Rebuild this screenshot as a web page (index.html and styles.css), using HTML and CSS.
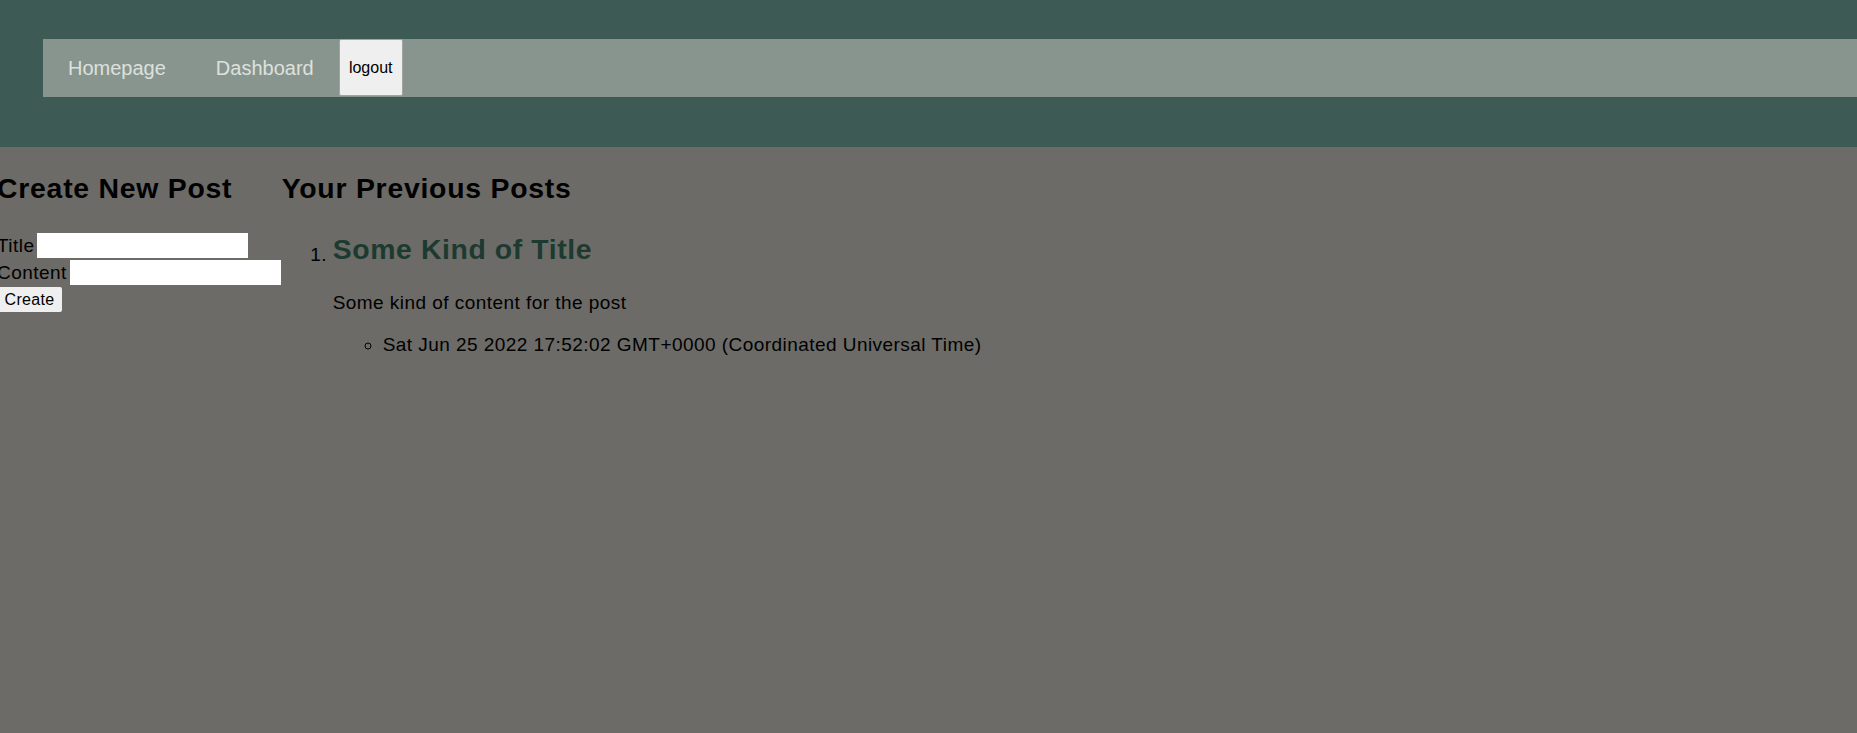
FILE: index.html
```html
<!DOCTYPE html>
<html>
<head>
<meta charset="utf-8">
<link rel="stylesheet" href="styles.css">
</head>
<body>
<header class="site-header">
  <nav class="nav">
    <a class="nav-link" href="#">Homepage</a>
    <a class="nav-link" href="#">Dashboard</a>
    <button class="logout-btn">logout</button>
  </nav>
</header>
<main class="main">
  <section class="create-col">
    <h2 class="section-title">Create New Post</h2>
    <form class="post-form">
      <div class="form-row"><label class="form-label">Title</label> <input class="form-input" type="text"></div>
      <div class="form-row"><label class="form-label">Content</label> <input class="form-input" type="text"></div>
      <div class="form-row"><button class="create-btn" type="button">Create</button></div>
    </form>
  </section>
  <section class="posts-col">
    <h2 class="section-title">Your Previous Posts</h2>
    <ol class="post-list">
      <li class="post-item">
        <h2 class="post-title">Some Kind of Title</h2>
        <p class="post-content">Some kind of content for the post</p>
        <ul class="post-meta">
          <li>Sat Jun 25 2022 17:52:02 GMT+0000 (Coordinated Universal Time)</li>
        </ul>
      </li>
    </ol>
  </section>
</main>
</body>
</html>
```
FILE: styles.css
```css
html, body {
  margin: 0;
  padding: 0;
}
body {
  background: #6c6b67;
  font-family: "Liberation Sans", Arial, sans-serif;
  font-size: 19px;
  letter-spacing: 0.45px;
  color: #000;
  min-height: 733px;
}
.site-header {
  background: #3d5a54;
  padding: 39px 0 50px 0;
}
.nav {
  margin-left: 43px;
  height: 58px;
  background: #88958f;
  display: flex;
  align-items: center;
  letter-spacing: 0;
}
.nav-link {
  color: #dde1dd;
  text-decoration: none;
  font-size: 20px;
  padding: 0 25px;
  line-height: 58px;
}
.logout-btn {
  align-self: flex-start;
  margin-left: 0;
  height: 57px;
  width: 64px;
  padding: 0;
  font-family: "Liberation Sans", Arial, sans-serif;
  font-size: 16px;
  color: #000;
  background: #efefef;
  border: 1px solid #a0a4a2;
  border-radius: 2px;
}
.main {
  display: flex;
  align-items: flex-start;
}
.create-col {
  margin-left: -3px;
}
.section-title {
  font-size: 28.4px;
  letter-spacing: 0.75px;
  font-weight: bold;
  margin: 25px 0 0 0;
  line-height: 33px;
}
.posts-col {
  margin-left: 1px;
}
.post-form {
  margin-top: 27px;
}
.form-row {
  height: 27px;
  display: flex;
  align-items: center;
  line-height: 22px;
}
.form-label {
  margin-right: 3px;
}
.form-input {
  width: 211px;
  height: 25px;
  box-sizing: border-box;
  border: none;
  background: #fff;
  padding: 0 3px;
  margin: 0;
}
.create-btn {
  margin-left: 0;
  height: 25px;
  width: 65px;
  padding: 0;
  font-family: "Liberation Sans", Arial, sans-serif;
  font-size: 16px;
  letter-spacing: 0.3px;
  color: #000;
  background: #efefef;
  border: none;
  border-radius: 2px;
}
.post-list {
  margin: 28px 0 0 0;
  padding-left: 51px;
  font-size: 19px;
}
.post-title {
  font-size: 28.4px;
  letter-spacing: 0.6px;
  color: #1d3a31;
  margin: 0;
  line-height: 33px;
  display: inline-block;
  vertical-align: bottom;
}
.post-content {
  margin: 26px 0 0 0;
  line-height: 22px;
}
.post-meta {
  list-style: circle;
  margin: 20px 0 0 0;
  padding-left: 50px;
  line-height: 22px;
}
```
